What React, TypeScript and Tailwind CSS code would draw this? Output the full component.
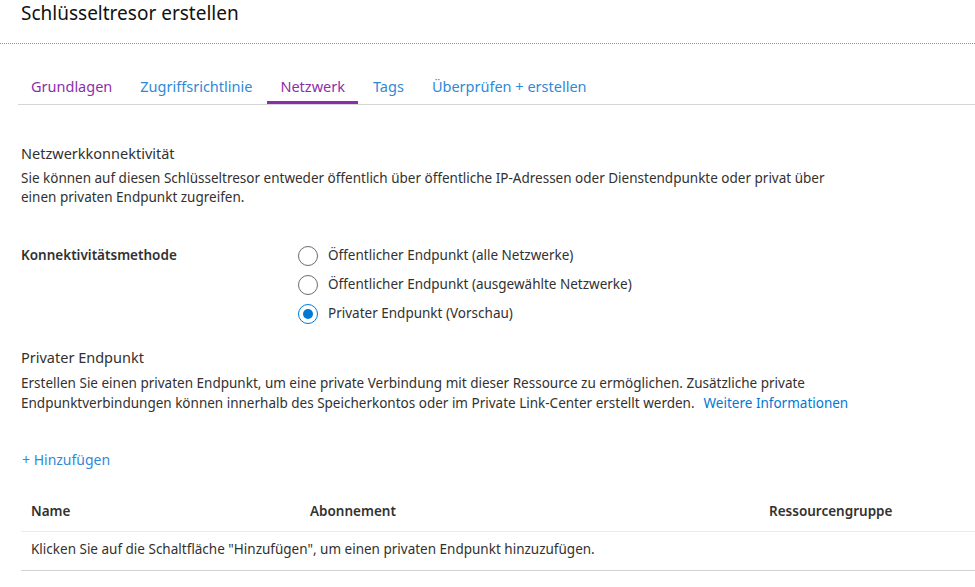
const tabs = [
  { label: "Grundlagen", color: "text-[#8b2fa9]", active: false },
  { label: "Zugriffsrichtlinie", color: "text-[#2f89d9]", active: false },
  { label: "Netzwerk", color: "text-[#8b2fa9]", active: true },
  { label: "Tags", color: "text-[#2f89d9]", active: false },
  { label: "Überprüfen + erstellen", color: "text-[#2f89d9]", active: false },
];

const methods = [
  { label: "Öffentlicher Endpunkt (alle Netzwerke)", checked: false },
  { label: "Öffentlicher Endpunkt (ausgewählte Netzwerke)", checked: false },
  { label: "Privater Endpunkt (Vorschau)", checked: true },
];

function Radio({ checked }: { checked: boolean }) {
  if (checked) {
    return (
      <span className="flex h-[20px] w-[20px] items-center justify-center rounded-full border border-[#0078d4]">
        <span className="h-[10px] w-[10px] rounded-full bg-[#0078d4]" />
      </span>
    );
  }
  return <span className="h-[20px] w-[20px] rounded-full border border-[#6b6b6b]" />;
}

export default function App() {
  return (
    <div className="h-[587px] w-[975px] overflow-hidden bg-white font-['Noto_Sans',sans-serif] text-[#323130]">
      {/* HEADER */}
      <div className="h-[44px] border-b border-dotted border-[#3db4e0] pl-[21px]">
        <h1 className="text-[19px] leading-[26px] text-[#111]">Schlüsseltresor erstellen</h1>
      </div>

      {/* TABS */}
      <div className="ml-[18px] mt-[25px] flex gap-[2px] border-b border-[#d6d6d6]">
        {tabs.map((t) => (
          <div
            key={t.label}
            className={`flex h-[35px] items-center border-b-[3px] px-[13px] pt-[4px] text-[14.5px] ${t.color} ${
              t.active ? "border-[#8b2fa9]" : "border-transparent"
            }`}
          >
            {t.label}
          </div>
        ))}
      </div>

      <div className="pl-[21px]">
        {/* NETZWERKKONNEKTIVITÄT */}
        <h2 className="mt-[38px] text-[14.5px] leading-[20px]">Netzwerkkonnektivität</h2>
        <p className="mt-[6px] text-[13.5px] leading-[19px]">
          Sie können auf diesen Schlüsseltresor entweder öffentlich über öffentliche IP-Adressen oder Dienstendpunkte oder privat über
          <br />
          einen privaten Endpunkt zugreifen.
        </p>

        {/* METHODE */}
        <div className="mt-[34px] flex">
          <div className="w-[277px] text-[13.5px] font-semibold leading-[29px]">Konnektivitätsmethode</div>
          <div className="flex flex-col">
            {methods.map((m) => (
              <label key={m.label} className="flex h-[29px] items-center gap-[10px] text-[13.5px]">
                <Radio checked={m.checked} />
                {m.label}
              </label>
            ))}
          </div>
        </div>

        {/* PRIVATER ENDPUNKT */}
        <h2 className="mt-[19px] text-[14.5px] leading-[20px]">Privater Endpunkt</h2>
        <p className="mt-[6px] text-[13.5px] leading-[20px]">
          Erstellen Sie einen privaten Endpunkt, um eine private Verbindung mit dieser Ressource zu ermöglichen. Zusätzliche private
          <br />
          Endpunktverbindungen können innerhalb des Speicherkontos oder im Private Link-Center erstellt werden.
          <a className="ml-[9px] text-[#0078d4]">Weitere Informationen</a>
        </p>

        <div className="mt-[37px] pl-[1px] text-[14px] leading-[20px] text-[#2f89d9]">+ Hinzufügen</div>

        {/* TABELLE */}
        <div className="mt-[22px] text-[13.5px]">
          <div className="grid h-[40px] grid-cols-[279px_459px_1fr] items-center border-b border-[#ebebeb] pl-[10px] font-semibold">
            <div>Name</div>
            <div>Abonnement</div>
            <div>Ressourcengruppe</div>
          </div>
          <div className="flex h-[39px] items-center border-b border-[#d2d2d2] pb-[4px] pl-[10px]">
            Klicken Sie auf die Schaltfläche "Hinzufügen", um einen privaten Endpunkt hinzuzufügen.
          </div>
        </div>
      </div>
    </div>
  );
}
